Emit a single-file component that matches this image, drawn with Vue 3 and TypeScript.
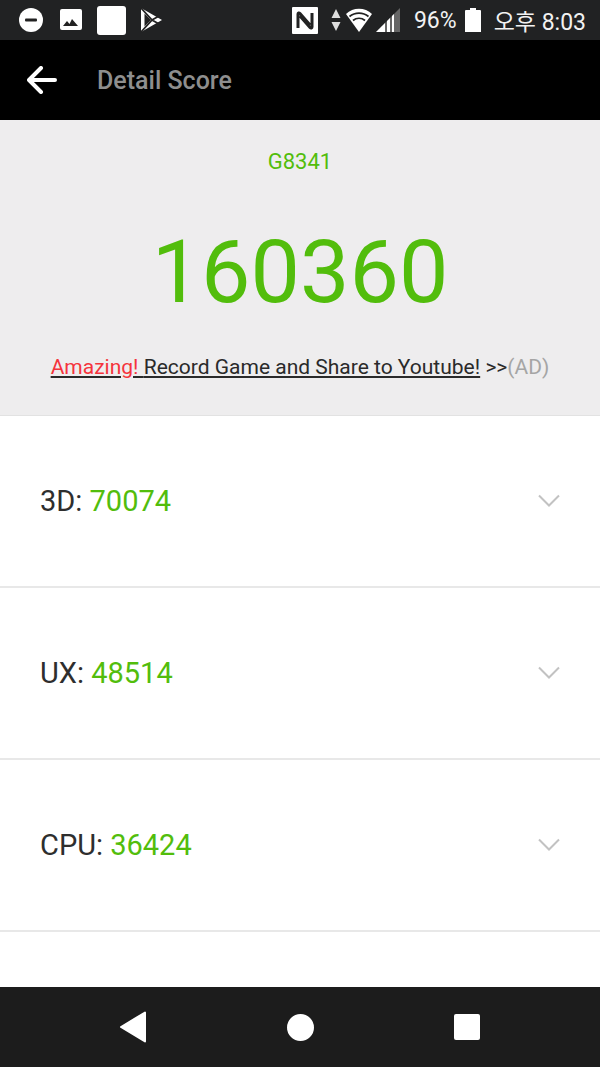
<template>
  <div class="screen">
    <div class="status-bar">
      <div class="status-left">
        <svg class="ic" width="26" height="26" viewBox="0 0 26 26"><circle cx="13" cy="13" r="12" fill="#fff" /><rect x="7" y="11.5" width="12" height="3" rx="1" fill="#222" /></svg>
        <svg class="ic" width="22" height="22" viewBox="0 0 22 22"><rect x="0" y="0" width="22" height="21" rx="2" fill="#fff" /><path d="M3 17l4-5 2.5 3 2.5-5 6 7z" fill="#222" /></svg>
        <div class="blank-square"></div>
        <svg class="ic" width="24" height="26" viewBox="0 0 24 26"><path d="M1 1l21 12L1 25z" fill="#fff" /><path d="M1 1l11 12L1 25M5 4.5v0M12 13l7-4M12 13l7 4" stroke="#222" stroke-width="1.8" fill="none" /><path d="M4.5 6.5L11 13l-6.500 6.500z" fill="#222" /></svg>
      </div>
      <div class="status-right">
        <svg class="ic nfc" width="26" height="27" viewBox="0 0 26 27"><rect width="26" height="27" rx="1" fill="#fff" /><path d="M6 21V7c0-1 1-1.500 2-.5L18 18M20 6v14c0 1-1 1.500-2 .5L8 9" stroke="#222" stroke-width="3" fill="none" /></svg>
        <svg class="ic arrows" width="10" height="24" viewBox="0 0 10 24"><path d="M5 1l4.500 9H.5zM5 23L.5 14h9z" fill="#ddd" /></svg>
        <svg class="ic wifi" width="28" height="24" viewBox="0 0 28 24"><path d="M1 6C8-1 20-1 27 6L14 24z" fill="#fff" /><path d="M4.500 8.500c5.500-4.500 13.500-4.500 19 0M8 12.500c3.500-3 8.500-3 12 0" stroke="#222" stroke-width="1.700" fill="none" /></svg>
        <svg class="ic signal" width="24" height="24" viewBox="0 0 24 24"><path d="M0 24L24 0v24z" fill="#666" /><path d="M0 24l3-3 3-3 3-3v9zM11 24V13l3-3v14zM16 24V8l2-2v18z" fill="#fff" /></svg>
        <span class="battery-pct">96%</span>
        <svg class="ic battery" width="16" height="24" viewBox="0 0 16 24"><path d="M5 0h6v2h4a1 1 0 0 1 1 1v21H0V3a1 1 0 0 1 1-1h4z" fill="#fff" /></svg>
        <span class="clock">오후 8:03</span>
      </div>
    </div>

    <header class="toolbar">
      <svg width="30" height="28" viewBox="0 0 30 28"><path d="M28 14H3M14 2L2 14l12 12" stroke="#fff" stroke-width="4" stroke-linecap="round" stroke-linejoin="round" fill="none" /></svg>
      <h1>Detail Score</h1>
    </header>

    <section class="hero">
      <div class="device">G8341</div>
      <div class="total">160360</div>
      <div class="promo">
        <span class="promo-link"><span class="amazing">Amazing! </span>Record Game and Share to Youtube!</span>
        <span class="arrows-text"> &gt;&gt;</span><span class="ad">(AD)</span>
      </div>
    </section>

    <ul class="score-list">
      <li v-for="s in scores" :key="s.label" class="score-row">
        <span class="label">{{ s.label }}: <span class="value">{{ s.value }}</span></span>
        <svg width="22" height="14" viewBox="0 0 22 14"><path d="M1 1.500l10 10 10-10" stroke="#c2c2c2" stroke-width="2" fill="none" /></svg>
      </li>
    </ul>

    <nav class="nav-bar">
      <svg width="28" height="34" viewBox="0 0 28 34"><path d="M26 2.500v29L2 17z" fill="#fff" stroke="#fff" stroke-width="2" stroke-linejoin="round" /></svg>
      <div class="home"></div>
      <div class="recent"></div>
    </nav>
  </div>
</template>

<script setup lang="ts">
const scores = [
  { label: '3D', value: 70074 },
  { label: 'UX', value: 48514 },
  { label: 'CPU', value: 36424 },
];
</script>

<style>
body {
  margin: 0;
  background: #fff;
}
</style>

<style scoped>
.screen {
  width: 600px;
  height: 1067px;
  display: flex;
  flex-direction: column;
  overflow: hidden;
  font-family: Roboto, "Noto Sans CJK KR", sans-serif;
}

.status-bar {
  height: 40px;
  flex: none;
  background: #212223;
  display: flex;
  align-items: center;
  justify-content: space-between;
  padding: 0 14px 0 18px;
  color: #f2f2f2;
}

.status-left,
.status-right {
  display: flex;
  align-items: center;
}

.status-left {
  gap: 16px;
}

.ic {
  display: block;
  flex: none;
}

.blank-square {
  width: 29px;
  height: 29px;
  background: #fff;
  border-radius: 3px;
  margin: 0 -2px 0 -1px;
}

.nfc { margin-right: 13px; }
.arrows { margin-right: 4px; }
.wifi { margin-right: 3px; }
.signal { margin-right: 14px; }

.battery-pct {
  font-size: 23px;
  margin-right: 8px;
}

.battery { margin-right: 13px; }

.clock {
  font-size: 23px;
}

.toolbar {
  height: 80px;
  flex: none;
  background: #000;
  display: flex;
  align-items: center;
  padding-left: 27px;
  gap: 40px;
}

.toolbar h1 {
  margin: 0;
  font-size: 25px;
  font-weight: 500;
  color: #8e8e8e;
}

.hero {
  height: 296px;
  flex: none;
  box-sizing: border-box;
  background: #eeedee;
  border-bottom: 1px solid #e2e2e2;
  padding-top: 28px;
  text-align: center;
}

.device {
  font-size: 22px;
  line-height: 28px;
  color: #52bd0c;
}

.total {
  font-size: 88px;
  line-height: 104px;
  margin-top: 44px;
  color: #52bd0c;
}

.promo {
  font-size: 21px;
  line-height: 28px;
  margin-top: 29px;
  color: #2a2a2a;
}

.promo-link {
  text-decoration: underline;
}

.amazing {
  color: #f5343c;
}

.ad {
  color: #a5a5a5;
}

.score-list {
  flex: 1;
  list-style: none;
  margin: 0;
  padding: 0;
  overflow: hidden;
  background: #fff;
}

.score-row {
  height: 172px;
  box-sizing: border-box;
  border-bottom: 2px solid #e8e8e8;
  display: flex;
  align-items: center;
  justify-content: space-between;
  padding: 0 40px;
}

.label {
  font-size: 29px;
  color: #2e2e2e;
}

.value {
  color: #52bd0c;
}

.nav-bar {
  height: 80px;
  flex: none;
  background: #1c1c1c;
  display: flex;
  align-items: center;
  justify-content: space-between;
  padding: 0 120px 0 119px;
}

.home {
  width: 27px;
  height: 27px;
  border-radius: 50%;
  background: #fff;
}

.recent {
  width: 26px;
  height: 26px;
  border-radius: 2px;
  background: #fff;
}
</style>
